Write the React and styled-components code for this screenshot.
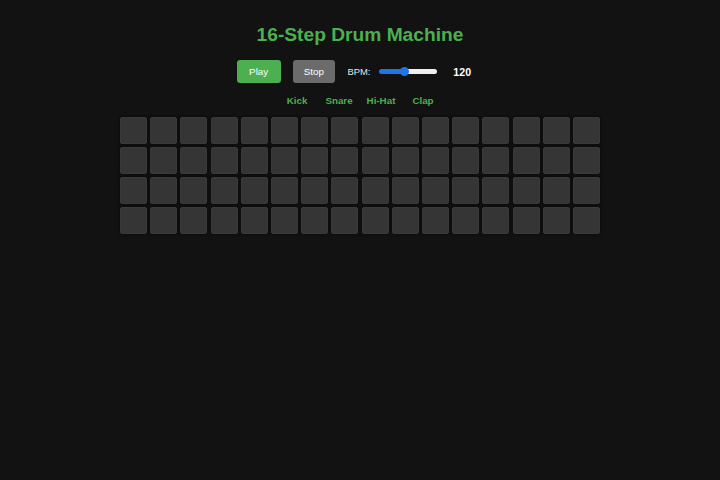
import React, { useState } from "react";
import styled, { createGlobalStyle } from "styled-components";

const GlobalStyle = createGlobalStyle`
  html, body {
    margin: 0;
    padding: 0;
    background: #121212;
    font-family: "Liberation Sans", Arial, sans-serif;
    color: #ffffff;
  }
  body {
    min-height: 480px;
  }
`;

const Page = styled.div`
  display: flex;
  flex-direction: column;
  align-items: center;
  padding-top: 24px;
`;

const Title = styled.h1`
  margin: 0;
  font-size: 19.2px;
  line-height: 22px;
  font-weight: 700;
  color: #4caf50;
`;

const Controls = styled.div`
  display: flex;
  align-items: center;
  justify-content: center;
  margin-top: 14px;
  height: 23px;
`;

const Button = styled.button`
  font-family: "Liberation Sans", Arial, sans-serif;
  font-size: 9.8px;
  line-height: 11px;
  padding: 6px 0;
  height: 23px;
  width: ${(p) => p.$w}px;
  border: none;
  border-radius: 3.2px;
  color: #ffffff;
  background: ${(p) => p.$bg};
  margin-right: ${(p) => p.$mr}px;
  cursor: pointer;
`;

const Label = styled.span`
  font-size: 9.4px;
  color: #e6e6e6;
  margin-right: 9px;
`;

const Range = styled.input`
  -webkit-appearance: none;
  appearance: none;
  width: 58px;
  height: 10px;
  margin: 0 16px 0 0;
  padding: 0;
  background: transparent;

  &::-webkit-slider-runnable-track {
    height: 5px;
    border-radius: 3px;
    background: linear-gradient(
      to right,
      #1d76e3 0,
      #1d76e3 ${(p) => p.$pct}%,
      #efefef ${(p) => p.$pct}%,
      #efefef 100%
    );
  }
  &::-webkit-slider-thumb {
    -webkit-appearance: none;
    width: 9px;
    height: 9px;
    margin-top: -2px;
    border-radius: 50%;
    background: #1d76e3;
    border: none;
  }
`;

const Value = styled.span`
  width: 30px;
  font-size: 10.6px;
  font-weight: 700;
  color: #ffffff;
`;

const Instruments = styled.div`
  display: flex;
  justify-content: center;
  margin-top: 11.5px;
`;

const Instrument = styled.div`
  width: 42px;
  text-align: center;
  font-size: 9.8px;
  line-height: 11px;
  font-weight: 700;
  color: #4caf50;
`;

const Grid = styled.div`
  display: grid;
  grid-template-columns: repeat(16, 27px);
  grid-auto-rows: 27px;
  column-gap: 3.2px;
  row-gap: 3px;
  margin-top: 11.5px;
`;

const Cell = styled.div`
  box-sizing: border-box;
  background: ${(p) => (p.$on ? "#4caf50" : "#353535")};
  border: 1px solid #3a3a3a;
  border-radius: 2px;
  box-shadow: 0 0 3px rgba(0, 0, 0, 0.7);
  cursor: pointer;
`;

const instruments = ["Kick", "Snare", "Hi-Hat", "Clap"];

export default function App() {
  const [bpm, setBpm] = useState(120);
  const [pattern, setPattern] = useState(
    instruments.map(() => Array(16).fill(false))
  );
  const min = 60;
  const max = 200;
  const pct = ((bpm - min) / (max - min)) * 100;

  const toggle = (r, c) =>
    setPattern((p) =>
      p.map((row, ri) => (ri === r ? row.map((v, ci) => (ci === c ? !v : v)) : row))
    );

  return (
    <>
      <GlobalStyle />
      <Page>
        <Title>16-Step Drum Machine</Title>
        <Controls>
          <Button $bg="#4caf50" $mr={12} $w={44}>
            Play
          </Button>
          <Button $bg="#6b6b6b" $mr={12.5} $w={42.3}>
            Stop
          </Button>
          <Label>BPM:</Label>
          <Range
            type="range"
            min={min}
            max={max}
            value={bpm}
            $pct={pct}
            onChange={(e) => setBpm(Number(e.target.value))}
          />
          <Value>{bpm}</Value>
        </Controls>
        <Instruments>
          {instruments.map((n) => (
            <Instrument key={n}>{n}</Instrument>
          ))}
        </Instruments>
        <Grid>
          {pattern.map((row, r) =>
            row.map((on, c) => (
              <Cell key={`${r}-${c}`} $on={on} onClick={() => toggle(r, c)} />
            ))
          )}
        </Grid>
      </Page>
    </>
  );
}
